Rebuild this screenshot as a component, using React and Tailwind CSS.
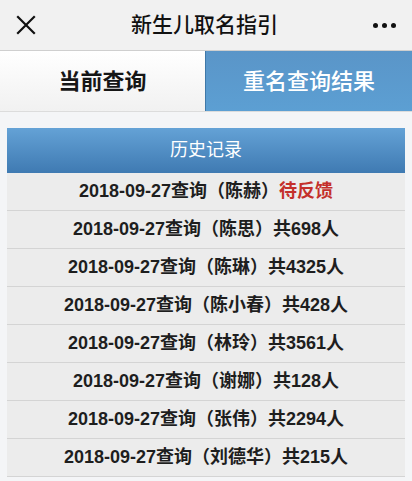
const records = [
  { name: "陈赫", result: "待反馈", pending: true },
  { name: "陈思", result: "共698人" },
  { name: "陈琳", result: "共4325人" },
  { name: "陈小春", result: "共428人" },
  { name: "林玲", result: "共3561人" },
  { name: "谢娜", result: "共128人" },
  { name: "张伟", result: "共2294人" },
  { name: "刘德华", result: "共215人" },
];

export default function App() {
  return (
    <div className="h-[481px] w-[412px] overflow-hidden bg-[#f4f5f7] font-['Liberation_Sans','Noto_Sans_CJK_SC',sans-serif]">
      {/* top bar */}
      <div className="flex h-[51px] items-center justify-between border-b border-[#cfcfcf] bg-[#f1f1f1] px-[15px]">
        <svg width="20" height="20" viewBox="0 0 20 20" className="ml-[1px]">
          <path d="M2 2L18 18M18 2L2 18" stroke="#111" strokeWidth="2.2" strokeLinecap="square" />
        </svg>
        <div className="text-[21px] font-medium text-[#111]">新生儿取名指引</div>
        <div className="flex gap-[4px] pr-[1px]">
          <span className="h-[5px] w-[5px] rounded-full bg-[#111]" />
          <span className="h-[5px] w-[5px] rounded-full bg-[#111]" />
          <span className="h-[5px] w-[5px] rounded-full bg-[#111]" />
        </div>
      </div>

      {/* tabs */}
      <div className="flex h-[61px] border-b border-[#dcdcdc]">
        <div className="flex w-[205px] items-center justify-center bg-gradient-to-b from-[#ffffff] to-[#f1f1f1] text-[22px] font-bold text-[#161616]">
          当前查询
        </div>
        <div className="flex flex-1 items-center justify-center border-l border-[#3f78a8] bg-gradient-to-b from-[#5a95c8] to-[#5c9fd3] text-[22px] font-medium text-white">
          重名查询结果
        </div>
      </div>

      {/* history */}
      <div className="mx-[7px] mt-[16px]">
        <div className="flex h-[45px] items-center justify-center bg-gradient-to-b from-[#64a2d6] to-[#3f7ab2] text-[18px] text-white">
          历史记录
        </div>
        {records.map((r) => (
          <div
            key={r.name}
            className="flex h-[38px] items-center justify-center border-b border-[#d4d4d4] bg-[#ececec] text-[18px] font-bold text-[#1e1e1e]"
          >
            2018-09-27查询（{r.name}）
            <span className={r.pending ? "text-[#c4302b]" : ""}>{r.result}</span>
          </div>
        ))}
      </div>
    </div>
  );
}
